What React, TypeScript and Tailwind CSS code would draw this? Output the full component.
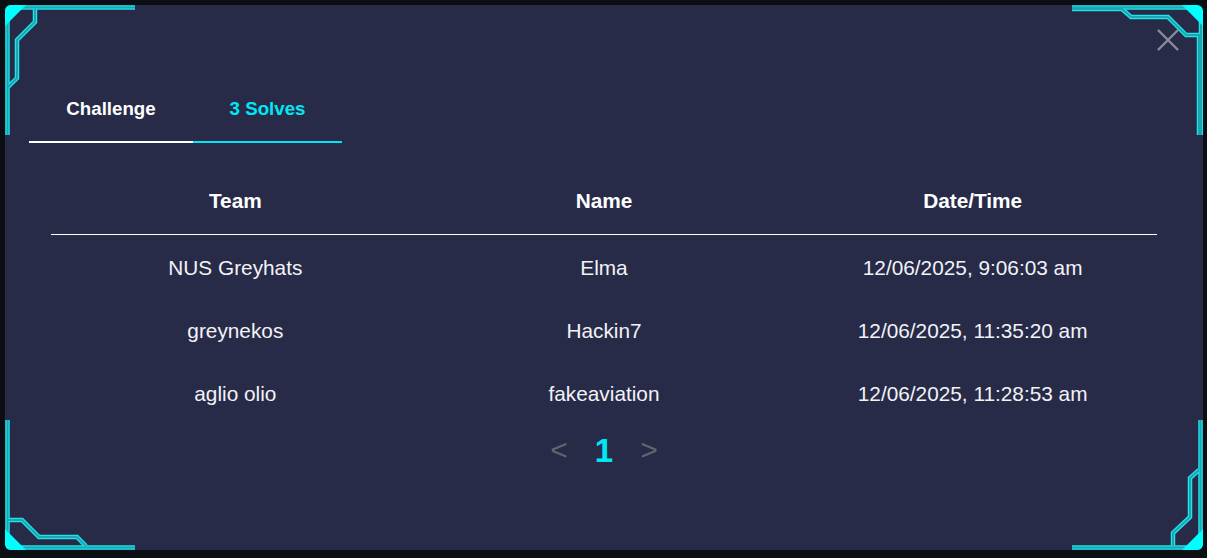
const solves = [
  { team: "NUS Greyhats", name: "Elma", time: "12/06/2025, 9:06:03 am" },
  { team: "greynekos", name: "Hackin7", time: "12/06/2025, 11:35:20 am" },
  { team: "aglio olio", name: "fakeaviation", time: "12/06/2025, 11:28:53 am" },
];

// corner frame pieces, page coordinates
const tubes = [
  "M 7.5 135 L 7.5 7.5 L 135 7.5",
  "M 35 9 L 35 22 L 17 40 L 17 78 L 8 87",
  "M 1072 7.5 L 1195 7.5",
  "M 1072 9 L 1122 9 L 1131 17 L 1168 17 L 1186 35 L 1199 35 L 1199 135",
  "M 1201 20 L 1201 135",
  "M 7.5 420 L 7.5 547.5 L 135 547.5",
  "M 8 520 L 22 520 L 39 537 L 77 537 L 86 546",
  "M 1200.5 420 L 1200.5 547.5 L 1072 547.5",
  "M 1199 470 L 1190 478 L 1190 517 L 1173 533 L 1173 546",
];

function Frame() {
  return (
    <svg
      className="absolute inset-0 pointer-events-none"
      width="1198"
      height="545"
      viewBox="5 5 1198 545"
    >
      {tubes.map((d) => (
        <path key={d} d={d} fill="none" stroke="#22e2ea" strokeWidth="4.5" strokeLinejoin="miter" />
      ))}
      {tubes.map((d) => (
        <path key={d + "i"} d={d} fill="none" stroke="#18a8b3" strokeWidth="2" strokeLinejoin="miter" />
      ))}
      <path d="M 5 5 L 26 5 L 5 26 Z" fill="#00ffff" />
      <path d="M 1182 5 L 1203 5 L 1203 26 Z" fill="#00ffff" />
      <path d="M 5 529 L 5 550 L 26 550 Z" fill="#00ffff" />
      <path d="M 1203 529 L 1203 550 L 1182 550 Z" fill="#00ffff" />
    </svg>
  );
}

export default function App() {
  return (
    <div
      className="w-[1207px] h-[558px] bg-[#0c0e15] p-[5px] overflow-hidden"
      style={{ fontFamily: '"Liberation Sans", Arial, sans-serif' }}
    >
      <div className="relative w-[1198px] h-[545px] bg-[#272b48] rounded-[6px] overflow-hidden pt-[71px] px-[24px]">
        <Frame />

        {/* close */}
        <button className="absolute left-[1151px] top-[23px] w-[24px] h-[24px]">
          <svg width="24" height="24" viewBox="0 0 24 24">
            <path d="M 2 2 L 22 22 M 22 2 L 2 22" stroke="#8c8c9b" strokeWidth="2.3" />
          </svg>
        </button>

        {/* Tabs */}
        <div className="flex">
          <div className="w-[164px] h-[67px] pt-[2px] flex items-center justify-center border-b-2 border-white text-white font-bold text-[18.7px]">
            Challenge
          </div>
          <div className="w-[149px] h-[67px] pt-[2px] flex items-center justify-center border-b-2 border-[#00e8f5] text-[#00e8f5] font-bold text-[18.7px]">
            3 Solves
          </div>
        </div>

        {/* Solves table */}
        <div className="mx-[22px] mt-[24px]">
          <div className="grid grid-cols-3 h-[68px] items-center border-b border-white text-white font-bold text-[20.8px] text-center">
            <div>Team</div>
            <div>Name</div>
            <div>Date/Time</div>
          </div>
          {solves.map((s) => (
            <div
              key={s.team}
              className="grid grid-cols-3 h-[63px] pt-[2px] items-center text-[#f2f2f7] text-[20.8px] text-center"
            >
              <div>{s.team}</div>
              <div>{s.name}</div>
              <div>{s.time}</div>
            </div>
          ))}
        </div>

        {/* Pagination */}
        <div className="flex items-center justify-center gap-[27px] h-[52px] leading-none">
          <span className="text-[#62636d] text-[30px]">&lt;</span>
          <span className="text-[#00e8f5] font-bold text-[33px]">1</span>
          <span className="text-[#62636d] text-[30px]">&gt;</span>
        </div>
      </div>
    </div>
  );
}
